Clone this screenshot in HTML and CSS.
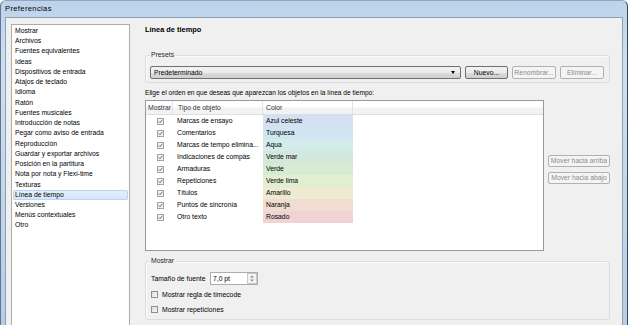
FILE: index.html
```html
<!DOCTYPE html>
<html lang="es">
<head>
    <meta charset="UTF-8">
    <title>Preferencias</title>
    <link rel="stylesheet" href="styles.css">
</head>
<body>
<div class="window">
    <div class="titlebar">Preferencias</div>
    <div class="client">
        <ul class="nav">
            <li>Mostrar</li>
            <li>Archivos</li>
            <li>Fuentes equivalentes</li>
            <li>Ideas</li>
            <li>Dispositivos de entrada</li>
            <li>Atajos de teclado</li>
            <li>Idioma</li>
            <li>Ratón</li>
            <li>Fuentes musicales</li>
            <li>Introducción de notas</li>
            <li>Pegar como aviso de entrada</li>
            <li>Reproducción</li>
            <li>Guardar y exportar archivos</li>
            <li>Posición en la partitura</li>
            <li>Nota por nota y Flexi-time</li>
            <li>Texturas</li>
            <li class="selected">Línea de tiempo</li>
            <li>Versiones</li>
            <li>Menús contextuales</li>
            <li>Otro</li>
        </ul>
        <div class="panel">
            <h1>Línea de tiempo</h1>
            <fieldset class="group presets">
                <legend>Presets</legend>
                <div class="preset-row">
                    <div class="combo">Predeterminado<span class="arrow"></span></div>
                    <div class="btn btn-new">Nuevo...</div>
                    <div class="btn disabled btn-ren">Renombrar...</div>
                    <div class="btn disabled btn-del">Eliminar...</div>
                </div>
            </fieldset>
            <p class="hint">Elige el orden en que deseas que aparezcan los objetos en la línea de tiempo:</p>
            <div class="order">
                <div class="list">
                    <div class="list-head">
                        <div class="th">Mostrar</div>
                        <div class="th">Tipo de objeto</div>
                        <div class="th">Color</div>
                        <div class="th"></div>
                    </div>
                    <div class="row"><span class="tick"><svg width="7" height="7"><rect x=".5" y=".5" width="6" height="6" fill="#f3f3f3" stroke="#a3a3a3"/><path d="M1.7 3.4l1.3 1.4 2.3-3" fill="none" stroke="#5b6c8c" stroke-width="1"/></svg></span><span class="name">Marcas de ensayo</span><span class="swatch c1">Azul celeste</span></div>
                    <div class="row"><span class="tick"><svg width="7" height="7"><rect x=".5" y=".5" width="6" height="6" fill="#f3f3f3" stroke="#a3a3a3"/><path d="M1.7 3.4l1.3 1.4 2.3-3" fill="none" stroke="#5b6c8c" stroke-width="1"/></svg></span><span class="name">Comentarios</span><span class="swatch c2">Turquesa</span></div>
                    <div class="row"><span class="tick"><svg width="7" height="7"><rect x=".5" y=".5" width="6" height="6" fill="#f3f3f3" stroke="#a3a3a3"/><path d="M1.7 3.4l1.3 1.4 2.3-3" fill="none" stroke="#5b6c8c" stroke-width="1"/></svg></span><span class="name">Marcas de tempo elimina...</span><span class="swatch c3">Aqua</span></div>
                    <div class="row"><span class="tick"><svg width="7" height="7"><rect x=".5" y=".5" width="6" height="6" fill="#f3f3f3" stroke="#a3a3a3"/><path d="M1.7 3.4l1.3 1.4 2.3-3" fill="none" stroke="#5b6c8c" stroke-width="1"/></svg></span><span class="name">Indicaciones de compás</span><span class="swatch c4">Verde mar</span></div>
                    <div class="row"><span class="tick"><svg width="7" height="7"><rect x=".5" y=".5" width="6" height="6" fill="#f3f3f3" stroke="#a3a3a3"/><path d="M1.7 3.4l1.3 1.4 2.3-3" fill="none" stroke="#5b6c8c" stroke-width="1"/></svg></span><span class="name">Armaduras</span><span class="swatch c5">Verde</span></div>
                    <div class="row"><span class="tick"><svg width="7" height="7"><rect x=".5" y=".5" width="6" height="6" fill="#f3f3f3" stroke="#a3a3a3"/><path d="M1.7 3.4l1.3 1.4 2.3-3" fill="none" stroke="#5b6c8c" stroke-width="1"/></svg></span><span class="name">Repeticiones</span><span class="swatch c6">Verde lima</span></div>
                    <div class="row"><span class="tick"><svg width="7" height="7"><rect x=".5" y=".5" width="6" height="6" fill="#f3f3f3" stroke="#a3a3a3"/><path d="M1.7 3.4l1.3 1.4 2.3-3" fill="none" stroke="#5b6c8c" stroke-width="1"/></svg></span><span class="name">Títulos</span><span class="swatch c7">Amarillo</span></div>
                    <div class="row"><span class="tick"><svg width="7" height="7"><rect x=".5" y=".5" width="6" height="6" fill="#f3f3f3" stroke="#a3a3a3"/><path d="M1.7 3.4l1.3 1.4 2.3-3" fill="none" stroke="#5b6c8c" stroke-width="1"/></svg></span><span class="name">Puntos de sincronía</span><span class="swatch c8">Naranja</span></div>
                    <div class="row"><span class="tick"><svg width="7" height="7"><rect x=".5" y=".5" width="6" height="6" fill="#f3f3f3" stroke="#a3a3a3"/><path d="M1.7 3.4l1.3 1.4 2.3-3" fill="none" stroke="#5b6c8c" stroke-width="1"/></svg></span><span class="name">Otro texto</span><span class="swatch c9">Rosado</span></div>
                </div>
                <div class="side">
                    <div class="btn disabled move">Mover hacia arriba</div>
                    <div class="btn disabled move">Mover hacia abajo</div>
                </div>
            </div>
            <fieldset class="group show">
                <legend>Mostrar</legend>
                <div class="field">
                    <span class="field-label">Tamaño de fuente</span>
                    <div class="num">
                        <span class="num-value">7,0 pt</span>
                        <span class="spin"><svg width="10" height="11"><rect x=".5" y=".5" width="9" height="10" fill="#f4f4f4" stroke="#c8c8c8"/><path d="M3 4.5h4L5 2.5z M3 6.5h4L5 8.5z" fill="#8a8a8a"/></svg></span>
                    </div>
                </div>
                <div class="check-row"><span class="box"></span>Mostrar regla de timecode</div>
                <div class="check-row"><span class="box"></span>Mostrar repeticiones</div>
            </fieldset>
        </div>
    </div>
</div>
</body>
</html>
```

FILE: styles.css
```css
body {
    margin: 0;
    font-family: "Liberation Sans", Arial, sans-serif;
    font-size: 6.8px;
    color: #000;
    overflow: hidden;
}
.window {
    width: 628px;
    height: 325px;
    box-sizing: border-box;
    display: flex;
    flex-direction: column;
    background: linear-gradient(#bcd3eb, #cfdff1 20%, #b7cde6 100%);
    border-left: 1px solid #62758c;
    border-right: 1px solid #3d4857;
    border-top: 1px solid #8fa6bf;
    border-radius: 6px 6px 0 0;
    overflow: hidden;
}
.titlebar {
    height: 16px;
    line-height: 16px;
    padding-left: 4px;
    font-size: 7.6px;
    letter-spacing: .35px;
}
.client {
    flex: 1;
    min-height: 0;
    margin: 0 4px;
    border: 1px solid #8aa0b9;
    border-bottom: none;
    background: #f0f0f0;
    display: flex;
    padding: 6px 0 0 5px;
}
.nav {
    flex: none;
    width: 119px;
    box-sizing: border-box;
    margin: 0 0 -4px;
    padding: 1px 0 0;
    list-style: none;
    background: #fff;
    border: 1px solid #acacac;
}
.nav li {
    height: 10.24px;
    line-height: 10.24px;
    margin: 0 1px;
    padding-left: 2px;
    white-space: nowrap;
}
.nav li.selected {
    background: linear-gradient(#e6f0fc, #d4e5f9);
    box-shadow: inset 0 0 0 1px #bcd5f3;
    border-radius: 2px;
}
.panel {
    flex: none;
    width: 465px;
    margin-left: 15px;
    padding-top: 1px;
    display: flex;
    flex-direction: column;
}
h1 {
    margin: 0;
    font-size: 7.4px;
    line-height: 10px;
    font-weight: bold;
}
.group {
    margin: 0;
    min-width: 0;
    border: 1px solid #d6dde3;
    border-radius: 3px;
    box-shadow: inset 1px 1px 0 #fbfbfb;
}
.group legend {
    padding: 0 1px;
    line-height: 8px;
    color: #1e1e1e;
}
.presets {
    margin-top: 16px;
    padding: 7px 4px 3px;
}
.preset-row {
    display: flex;
    align-items: center;
}
.combo {
    width: 311px;
    height: 13px;
    box-sizing: border-box;
    padding-left: 3px;
    line-height: 11px;
    border: 1px solid #707070;
    border-radius: 2px;
    background: linear-gradient(#f2f2f2, #ebebeb 50%, #dddddd 51%, #cfcfcf);
    display: flex;
    justify-content: space-between;
    align-items: center;
}
.arrow {
    width: 0;
    height: 0;
    margin-right: 5px;
    border-left: 2.5px solid transparent;
    border-right: 2.5px solid transparent;
    border-top: 3px solid #000;
}
.btn {
    height: 13px;
    box-sizing: border-box;
    line-height: 11px;
    text-align: center;
    border: 1px solid #707070;
    border-radius: 2px;
    background: linear-gradient(#f2f2f2, #ebebeb 50%, #dddddd 51%, #cfcfcf);
    white-space: nowrap;
}
.btn.disabled {
    border-color: #adb2b5;
    background: #f4f4f4;
    color: #8c8c8c;
}
.btn-new {
    width: 43px;
    margin-left: 4px;
}
.btn-ren {
    width: 44px;
    margin-left: 4px;
}
.btn-del {
    width: 44px;
    margin-left: 4px;
}
.hint {
    margin: 5px 0 0;
    line-height: 9px;
    font-size: 6.6px;
}
.order {
    display: flex;
    margin-top: 3px;
}
.list {
    width: 399px;
    height: 151px;
    box-sizing: border-box;
    border: 1px solid #959a9f;
    background: #fff;
}
.list-head {
    display: grid;
    grid-template-columns: 27px 90px 90px 1fr;
    height: 14px;
    box-sizing: border-box;
    border-bottom: 1px solid #dedfe1;
    background: linear-gradient(#fff 45%, #f1f2f4 55%);
}
.th {
    line-height: 13px;
    padding-left: 2px;
    border-right: 1px solid #e1e2e4;
    color: #333;
}
.th:nth-child(2) {
    padding-left: 5px;
}
.th:nth-child(3) {
    padding-left: 3px;
}
.th:last-child {
    border-right: none;
}
.row {
    display: grid;
    grid-template-columns: 27px 90px 90px;
    height: 12px;
    line-height: 12px;
}
.tick {
    display: flex;
    align-items: center;
    padding-left: 11px;
}
.name {
    padding-left: 4px;
    white-space: nowrap;
    overflow: hidden;
}
.swatch {
    padding-left: 3px;
}
.c1 { background: #d5e0f2; }
.c2 { background: #cfe5f1; }
.c3 { background: #d3ebea; }
.c4 { background: #d3e8dc; }
.c5 { background: #d6ecd2; }
.c6 { background: #e2eed2; }
.c7 { background: #efead2; }
.c8 { background: #f0dcd0; }
.c9 { background: #f0d3d5; }
.side {
    display: flex;
    flex-direction: column;
    gap: 5px;
    margin-left: 4px;
    padding-top: 55px;
}
.move {
    width: 62px;
    height: 12px;
    line-height: 10px;
}
.show {
    margin-top: 6px;
    padding: 7px 4px 4px 5px;
}
.show legend {
    margin-left: -1px;
}
.field {
    display: flex;
    align-items: center;
    height: 13px;
}
.field-label {
    width: 59px;
}
.num {
    width: 48px;
    height: 13px;
    box-sizing: border-box;
    border: 1px solid #abadb3;
    background: #fff;
    display: flex;
    justify-content: space-between;
    align-items: center;
    padding-left: 2px;
}
.spin {
    display: flex;
}
.check-row {
    display: flex;
    align-items: center;
    height: 12px;
    margin-top: 3px;
}
.box {
    width: 7px;
    height: 7px;
    box-sizing: border-box;
    border: 1px solid #8f8f8f;
    background: linear-gradient(135deg, #dcdcdc, #f8f8f8);
    margin-right: 4px;
}
```
